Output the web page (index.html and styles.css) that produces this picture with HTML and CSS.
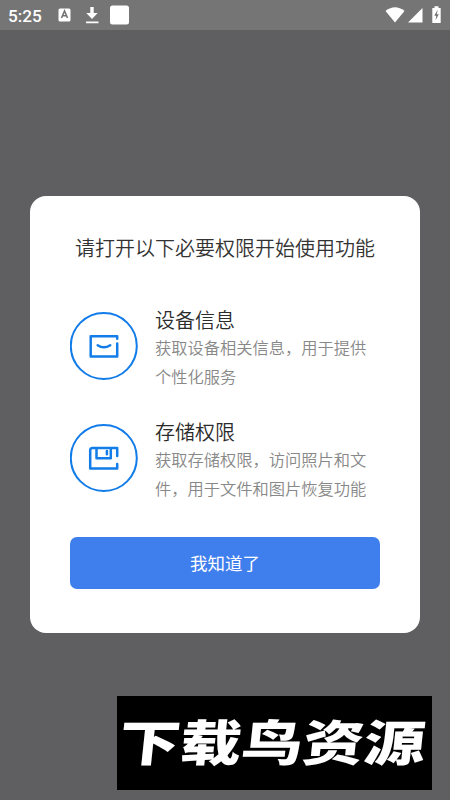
FILE: index.html
```html
<!DOCTYPE html>
<html lang="zh-CN">
<head>
<meta charset="utf-8">
<title>权限说明</title>
<link rel="stylesheet" href="styles.css">
</head>
<body>
<header class="status">
  <span class="time">5:25</span>
  <svg class="notices" width="74" height="22" viewBox="0 0 74 22">
    <rect x=".5" y="4.500" width="12" height="13" rx="1.500" fill="#fff"/>
    <path d="M3.500 14l3-7 3 7M4.500 11.700h4" fill="none" stroke="#707070" stroke-width="1.500"/>
    <path d="M32.300 3h3.400v6h4l-5.700 6-5.700-6h4zM28 17.500h12.500v1.800H28z" fill="#fff"/>
    <rect x="52" y="1.500" width="19" height="19" rx="2.500" fill="#fff"/>
  </svg>
  <svg class="system" width="58" height="20" viewBox="0 0 58 20">
    <path d="M1.500 6Q11-1.500 20.500 6L11 17.500z" fill="#fff"/>
    <path d="M38.500 3v14.500H24z" fill="#fff"/>
    <path d="M48.300 3h2.200V1.200h4V3h2.200v15h-8.400z" fill="#fff"/>
    <path d="m53.800 4.500-3.500 6.300h2l-.8 4.500 3.300-6h-2z" fill="#707070"/>
  </svg>
</header>
<main class="scrim">
  <section class="card">
    <h1 class="title">请打开以下必要权限开始使用功能</h1>
    <div class="permission">
      <svg class="icon" width="68" height="68" viewBox="0 0 68 68">
        <circle cx="33.800" cy="34" r="33"/>
        <path class="glyph" d="M47.200 26.700v-2.500H20.700v20.300h26.500V31.500M27.700 33.200q6 4.200 12.500 0"/>
      </svg>
      <div class="copy">
        <h2 class="name">设备信息</h2>
        <p class="desc">获取设备相关信息，用于提供<br>个性化服务</p>
      </div>
    </div>
    <div class="permission">
      <svg class="icon" width="68" height="68" viewBox="0 0 68 68">
        <circle cx="33.800" cy="34" r="33"/>
        <path class="glyph" d="M47.200 32v-8H22.500q-2.300 0-2.300 2.300v18.200h27V40M26.500 24v10.300h14.300V24M36.900 27v3.200"/>
      </svg>
      <div class="copy">
        <h2 class="name">存储权限</h2>
        <p class="desc">获取存储权限，访问照片和文<br>件，用于文件和图片恢复功能</p>
      </div>
    </div>
    <button class="confirm">我知道了</button>
  </section>
</main>
<div class="watermark"><span class="brand">下载鸟资源</span></div>
</body>
</html>
```
FILE: styles.css
```css
* { box-sizing: border-box; }
body {
  margin: 0;
  width: 450px;
  height: 800px;
  overflow: hidden;
  position: relative;
  background: #5f5f61;
  font-family: "Noto Sans CJK SC", sans-serif;
}
h1, h2, p { margin: 0; font-weight: 350; white-space: nowrap; }
svg { display: block; flex: none; }
.status {
  height: 30px;
  display: flex;
  align-items: center;
  padding: 0 8px;
  background: #757575;
}
.time {
  width: 50px;
  padding-top: 1px;
  color: #fff;
  font: 500 17.200px/30px Roboto, sans-serif;
}
.system { margin-left: auto; }
.scrim { padding: 166px 30px 0; }
.card {
  height: 437px;
  padding: 37px 40px 0;
  border-radius: 16px;
  background: #fff;
}
.title {
  margin-bottom: 49px;
  color: #333;
  font-size: 20px;
  line-height: 30px;
  text-align: center;
}
.permission {
  height: 112px;
  display: flex;
  gap: 17px;
}
.icon {
  fill: none;
  stroke: #127ce9;
  stroke-width: 2;
}
.glyph {
  stroke-width: 2.5;
  stroke-linecap: round;
  stroke-linejoin: round;
}
.copy { margin-top: -6px; }
.name {
  color: #2b2b2b;
  font-size: 20px;
  line-height: 28px;
}
.desc {
  margin-top: -1px;
  color: #888;
  font-size: 16.250px;
  line-height: 28.500px;
}
.confirm {
  display: block;
  width: 310px;
  height: 52px;
  margin-top: 1px;
  padding: 0;
  border: 0;
  border-radius: 7px;
  background: #3f7eed;
  color: #fff;
  font: 400 17.500px/52px "Noto Sans CJK SC", sans-serif;
}
.watermark {
  position: absolute;
  left: 117px;
  top: 696px;
  width: 315px;
  height: 94px;
  display: flex;
  align-items: center;
  justify-content: center;
  background: #000;
}
.brand {
  color: #fff;
  font-size: 49px;
  font-weight: 900;
  line-height: 94px;
  white-space: nowrap;
  transform: translate(-2px, -3px) skewX(-6deg) scaleX(1.25);
}
```
